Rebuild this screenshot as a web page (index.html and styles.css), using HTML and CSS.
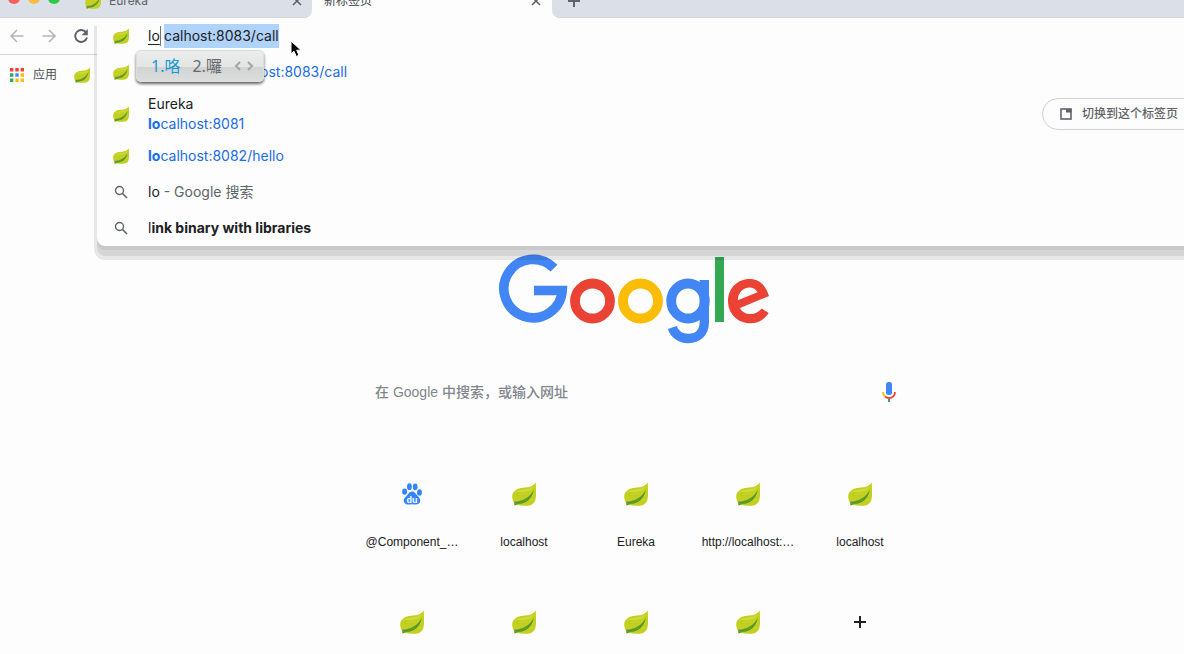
FILE: index.html
```html
<!DOCTYPE html>
<html lang="zh-CN">
<head>
<meta charset="utf-8">
<title>新标签页</title>
<link rel="stylesheet" href="styles.css">
</head>
<body>
<svg class="defs" aria-hidden="true">
  <symbol id="leaf" viewBox="0 0 24 24">
    <path d="M23.600.3C21 4.800 17 5.200 11 5.800 4.500 6.400.3 9.500.2 14.600c0 3 .8 4.800 2 6.200L2.600 23.600l2-.8c4 1 9 1.200 13 .6 5-.9 6.200-5 6.400-10.300.2-4.400.1-8.900-.4-12.800z" fill="#c3d022"/>
    <path d="M2.200 19.600C10 19.500 17 16 21.800 8 20.800 15.500 15 21.800 6.500 22l-3.900 1.600z" fill="#5f9a2c"/>
    <path d="M3 10.500c5-4.500 13-1 19-6.500-2.500 7-10 5-19 6.500z" fill="#d0dc38"/>
  </symbol>
  <symbol id="close" viewBox="0 0 10 10"><path d="M1 1l8 8M9 1L1 9" stroke="#5f6368" stroke-width="1.600" fill="none"/></symbol>
  <symbol id="search" viewBox="0 0 14 14"><circle cx="5.500" cy="5.500" r="4" fill="none" stroke="#5f6368" stroke-width="1.400"/><path d="M8.500 8.500L13 13" stroke="#5f6368" stroke-width="1.600"/></symbol>
</svg>

<header class="tabstrip">
  <div class="strip-left">
    <div class="lights"><i class="light red"></i><i class="light yellow"></i><i class="light green"></i></div>
    <div class="tab">
      <svg class="leaf"><use href="#leaf"/></svg>
      <span class="tab-title">Eureka</span>
      <button class="icon-btn" aria-label="关闭"><svg class="close"><use href="#close"/></svg></button>
    </div>
  </div>
  <div class="tab active">
    <span class="tab-title">新标签页</span>
    <button class="icon-btn" aria-label="关闭"><svg class="close"><use href="#close"/></svg></button>
  </div>
  <div class="strip-right">
    <button class="icon-btn" aria-label="新建标签页"><svg class="plus" viewBox="0 0 12 12"><path d="M6 0v12M0 6h12" stroke="#5f6368" stroke-width="2"/></svg></button>
  </div>
</header>

<nav class="toolbar">
  <button class="icon-btn" aria-label="后退"><svg class="nav-icon" viewBox="0 0 16 16"><path d="M14.500 8H2M8 2L2 8l6 6" fill="none" stroke="#b4b6b9" stroke-width="1.600"/></svg></button>
  <button class="icon-btn" aria-label="前进"><svg class="nav-icon" viewBox="0 0 16 16"><path d="M1.500 8H14M8 2l6 6-6 6" fill="none" stroke="#b4b6b9" stroke-width="1.600"/></svg></button>
  <button class="icon-btn" aria-label="重新加载"><svg class="nav-icon" viewBox="0 0 16 16"><path d="M13.300 4.800A6 6 0 1 0 14 9.500" fill="none" stroke="#5f6368" stroke-width="1.900"/><path d="M14.800 1v6.200H8.600z" fill="#5f6368"/></svg></button>
</nav>

<nav class="bookmarks">
  <a class="apps" href="#"><svg class="apps-icon" viewBox="0 0 14 14">
    <path d="M0 0h3.400v3.400H0zM5.300 0h3.400v3.400H5.300zM10.600 0H14v3.400h-3.400z" fill="#ea4335"/>
    <path d="M0 5.300h3.400v3.400H0zM0 10.600h3.400V14H0z" fill="#34a853"/>
    <path d="M5.300 5.300h3.400v3.400H5.300z" fill="#4285f4"/>
    <path d="M10.600 5.300H14v3.400h-3.400zM5.300 10.600h3.400V14H5.300zM10.600 10.600H14V14h-3.400z" fill="#fbbc05"/>
  </svg>应用</a>
  <a href="#" aria-label="书签"><svg class="leaf"><use href="#leaf"/></svg></a>
</nav>

<section class="omnibox">
  <div class="row">
    <span class="row-icon"><svg class="leaf"><use href="#leaf"/></svg></span>
    <input class="typed" type="text" value="lo" aria-label="地址栏"><span class="completion">calhost:8083/call</span>
  </div>
  <a class="row" href="#">
    <span class="row-icon"><svg class="leaf"><use href="#leaf"/></svg></span>
    <span class="url behind"><b>lo</b>calhost:8083/call</span>
  </a>
  <div class="row tall">
    <span class="row-icon"><svg class="leaf"><use href="#leaf"/></svg></span>
    <a class="stack" href="#"><span>Eureka</span><span class="url"><b>lo</b>calhost:8081</span></a>
    <button class="switch"><svg class="tab-icon" viewBox="0 0 12 12"><rect x="1" y="1" width="10" height="10" fill="none" stroke="#5f6368" stroke-width="1.600"/><path d="M6 1h5.500v3.500H6z" fill="#5f6368"/></svg>切换到这个标签页</button>
  </div>
  <a class="row" href="#">
    <span class="row-icon"><svg class="leaf"><use href="#leaf"/></svg></span>
    <span class="url"><b>lo</b>calhost:8082/hello</span>
  </a>
  <a class="row" href="#">
    <span class="row-icon"><svg class="search-icon"><use href="#search"/></svg></span>
    <span>lo <span class="muted">- Google 搜索</span></span>
  </a>
  <a class="row" href="#">
    <span class="row-icon"><svg class="search-icon"><use href="#search"/></svg></span>
    <span>l<b>ink binary with libraries</b></span>
  </a>
</section>

<div class="ime">
  <span class="chosen">1.咯</span><span>2.囉</span>
  <svg class="pager" viewBox="0 0 20 10"><path d="M6 1L2 5l4 4M14 1l4 4-4 4" fill="none" stroke="#a5a5a5" stroke-width="2"/></svg>
</div>
<svg class="cursor" viewBox="0 0 12 18"><path d="M1 1v13l3-2.800 2.300 5.300 2.700-1.200L6.700 10.200H11z" fill="#000" stroke="#fff" stroke-width="1"/></svg>

<main class="page">
  <svg class="logo" viewBox="-2 0 276 90" role="img" aria-label="Google">
    <g fill="none" stroke-width="9.800">
      <path d="M54 14.200A29.200 29.200 0 1 0 62.200 36.500H34" stroke="#4285f4" stroke-width="9.600"/>
      <circle cx="92.500" cy="47" r="17.500" stroke="#ea4335"/>
      <circle cx="140.500" cy="47" r="17.500" stroke="#fbbc05"/>
      <ellipse cx="188" cy="47" rx="16.800" ry="17.500" stroke="#4285f4"/>
      <path d="M204.300 26v42c0 11-7 16.500-16 16.500-8.500 0-14-5-16-11" stroke="#4285f4" stroke-width="9.400"/>
      <path d="M219.500 3v65" stroke="#34a853" stroke-width="9"/>
    </g>
    <path fill="#ea4335" fill-rule="evenodd" d="M269 42L240 54c2 4 6 6 10.500 6s8.500-2 11.200-5.500l7 4.500c-4.200 6.500-10.700 10.300-18.200 10.300C237.500 69.300 228 59.500 228 47s9.500-22 21.500-22c10.500 0 16.500 7 19.500 17zM237.800 46.300l19.700-8c-1.500-3.300-4.500-4.900-7.800-4.900-6.700 0-11.700 5.100-11.900 12.900z"/>
  </svg>
  <form class="search">
    <input type="text" placeholder="在 Google 中搜索，或输入网址" aria-label="搜索">
    <button class="icon-btn" type="button" aria-label="语音搜索"><svg class="mic" viewBox="0 0 14 20">
      <rect x="4" y="0" width="6" height="13" rx="2.500" fill="#4285f4"/>
      <path d="M1 10c0 2 .7 3.500 2 4.700" fill="none" stroke="#fbbc05" stroke-width="1.800"/>
      <path d="M13 10c0 3.500-2.500 6-6 6-1.600 0-3-.5-4-1.300" fill="none" stroke="#ea4335" stroke-width="1.800"/>
      <path d="M7 17v3" stroke="#34a853" stroke-width="2"/>
    </svg></button>
  </form>
  <div class="tiles">
    <a class="tile" href="#"><svg class="paw" viewBox="0 0 20 22">
      <g fill="#3385ff"><ellipse cx="2.600" cy="8.600" rx="2.500" ry="3.200"/><ellipse cx="7.400" cy="3.700" rx="2.400" ry="3.400"/><ellipse cx="13.200" cy="3.800" rx="2.400" ry="3.400"/><ellipse cx="17.500" cy="9.500" rx="2.400" ry="3.200"/>
      <path d="M10 8.500c3 0 4 2.800 6 4.800 2.500 2.400 3 5 1.200 7-1.800 1.900-4.700.9-7.200.9s-5.500 1-7.300-1c-1.800-2.200-1-4.600 1.300-6.700C6.200 11.500 7 8.500 10 8.500z"/></g>
      <text class="paw-text" x="10" y="19.500" text-anchor="middle">du</text>
    </svg><span>@Component_…</span></a>
    <a class="tile" href="#"><svg class="leaf-lg"><use href="#leaf"/></svg><span>localhost</span></a>
    <a class="tile" href="#"><svg class="leaf-lg"><use href="#leaf"/></svg><span>Eureka</span></a>
    <a class="tile" href="#"><svg class="leaf-lg"><use href="#leaf"/></svg><span>http://localhost:…</span></a>
    <a class="tile" href="#"><svg class="leaf-lg"><use href="#leaf"/></svg><span>localhost</span></a>
    <a class="tile" href="#" aria-label="快捷方式"><svg class="leaf-lg"><use href="#leaf"/></svg></a>
    <a class="tile" href="#" aria-label="快捷方式"><svg class="leaf-lg"><use href="#leaf"/></svg></a>
    <a class="tile" href="#" aria-label="快捷方式"><svg class="leaf-lg"><use href="#leaf"/></svg></a>
    <a class="tile" href="#" aria-label="快捷方式"><svg class="leaf-lg"><use href="#leaf"/></svg></a>
    <button class="tile" aria-label="添加快捷方式"><svg class="add" viewBox="0 0 12 12"><path d="M6 0v12M0 6h12" stroke="#202124" stroke-width="2"/></svg></button>
  </div>
</main>
</body>
</html>
```
FILE: styles.css
```css
* { box-sizing: border-box; }
body {
  display: flex;
  flex-direction: column;
  margin: 0;
  height: 100vh;
  overflow: hidden;
  position: relative;
  background: #fdfdfd;
  color: #202124;
  font: 14px/20px Inter, "Noto Sans CJK SC", sans-serif;
}
svg { display: block; flex: none; }
a { color: inherit; text-decoration: none; }
button, input { font: inherit; color: inherit; border: 0; padding: 0; margin: 0; background: none; outline: 0; }
.defs { position: absolute; width: 0; height: 0; }
.icon-btn { display: flex; align-items: center; justify-content: center; }
.leaf { width: 16px; height: 16px; }

.tabstrip { display: flex; flex: none; align-items: flex-end; height: 18px; overflow: hidden; font-size: 12px; color: #5f6368; }
.strip-left, .strip-right { display: flex; height: 34px; background: #dbdfe8; border-bottom: 1px solid #d3d7dc; }
.strip-left { width: 312px; border-bottom-right-radius: 8px; }
.strip-right { flex: 1; border-bottom-left-radius: 8px; padding-left: 16px; }
.lights { display: flex; align-items: flex-end; gap: 8px; padding: 0 25px 13px 8px; }
.light { width: 12px; height: 12px; border-radius: 50%; }
.red { background: #fc605c; }
.yellow { background: #fdbc40; }
.green { background: #2fca44; }
.tab { display: flex; flex: 1; align-items: center; gap: 8px; height: 34px; padding-right: 10px; }
.tab-title { flex: 1; }
.active { flex: none; width: 240px; padding-left: 12px; padding-right: 11px; color: #3c4043; }
.close { width: 10px; height: 10px; }
.plus { width: 12px; height: 12px; }

.toolbar { display: flex; flex: none; align-items: center; gap: 16px; height: 37px; padding-left: 9px; border-bottom: 1px solid #d4d5d6; }
.nav-icon { width: 16px; height: 16px; }
.bookmarks { display: flex; flex: none; align-items: center; gap: 17px; height: 39px; padding-left: 10px; font-size: 12px; color: #4a4d51; }
.apps { display: flex; align-items: center; gap: 9px; }
.apps-icon { width: 14px; height: 14px; }

.omnibox {
  position: absolute;
  z-index: 2;
  top: 18px;
  left: 97px;
  right: 0;
  background: #fdfdfd;
  border-bottom-left-radius: 8px;
  box-shadow: 0 4px 0 0 rgba(0, 0, 0, .06), 0 10px 0 0 rgba(0, 0, 0, .07), 0 11px 0 3px rgba(0, 10, 5, .09);
}
.row { display: flex; align-items: center; height: 36px; padding-left: 16px; }
.tall { height: 48px; }
.row-icon { display: flex; justify-content: center; width: 16px; margin-right: 19px; }
.search-icon { width: 14px; height: 14px; }
.typed { width: 13px; border-right: 1px solid #777; text-decoration: underline; text-underline-offset: 3px; }
.completion { margin-left: 3px; line-height: 24px; background: #b0d3f9; }
.url { color: #1a6ce8; }
.behind { padding-left: 72px; }
.stack { display: flex; flex: 1; flex-direction: column; }
.muted { color: #5f6368; }
b { font-weight: 700; }
.switch {
  display: flex;
  align-items: center;
  gap: 10px;
  height: 32px;
  margin-right: -16px;
  padding: 0 21px 0 17px;
  border: 1px solid #cfd1d3;
  border-radius: 16px;
  font-size: 12px;
  font-weight: 500;
  color: #5f6368;
}
.tab-icon { width: 12px; height: 12px; }

.ime {
  position: absolute;
  z-index: 3;
  top: 50px;
  left: 136px;
  display: flex;
  align-items: center;
  gap: 12px;
  height: 32px;
  padding: 0 9px 0 14px;
  border: 1px solid #dcdddd;
  border-radius: 5px;
  background: linear-gradient(#eceded, #e3e4e4 55%, #d2d3d3 55%, #dcdddd);
  box-shadow: 0 2px 3px rgba(0, 0, 0, .6);
  font: 16px/20px "Noto Sans", "Noto Sans CJK SC", sans-serif;
  color: #66696b;
}
.chosen { color: #1a9ad6; }
.pager { width: 20px; height: 10px; }
.cursor { position: absolute; z-index: 4; top: 40px; left: 290px; width: 12px; height: 18px; }

.page { display: flex; flex: 1; flex-direction: column; align-items: center; min-height: 0; overflow: hidden; padding: 160px 0 0 88px; }
.logo { width: 276px; height: 90px; }
.search { display: flex; flex: none; align-items: center; width: 560px; height: 44px; margin-top: 26px; padding: 0 20px 0 19px; font: 14px/20px "Liberation Sans", "Noto Sans CJK SC", sans-serif; }
.search input { flex: 1; }
.search input::placeholder { color: #80868b; opacity: 1; font-weight: 500; }
.mic { width: 14px; height: 20px; }
.tiles { display: grid; grid-template-columns: repeat(5, 112px); grid-auto-rows: 128px; margin-top: 44px; font: 12px/16px "Liberation Sans", sans-serif; }
.tile { display: flex; flex-direction: column; align-items: center; gap: 28px; padding-top: 24px; }
.leaf-lg { width: 24px; height: 24px; }
.paw { width: 20px; height: 24px; }
.paw-text { fill: #fff; font: bold 9px "Liberation Sans", sans-serif; }
.add { width: 12px; height: 24px; }
```
